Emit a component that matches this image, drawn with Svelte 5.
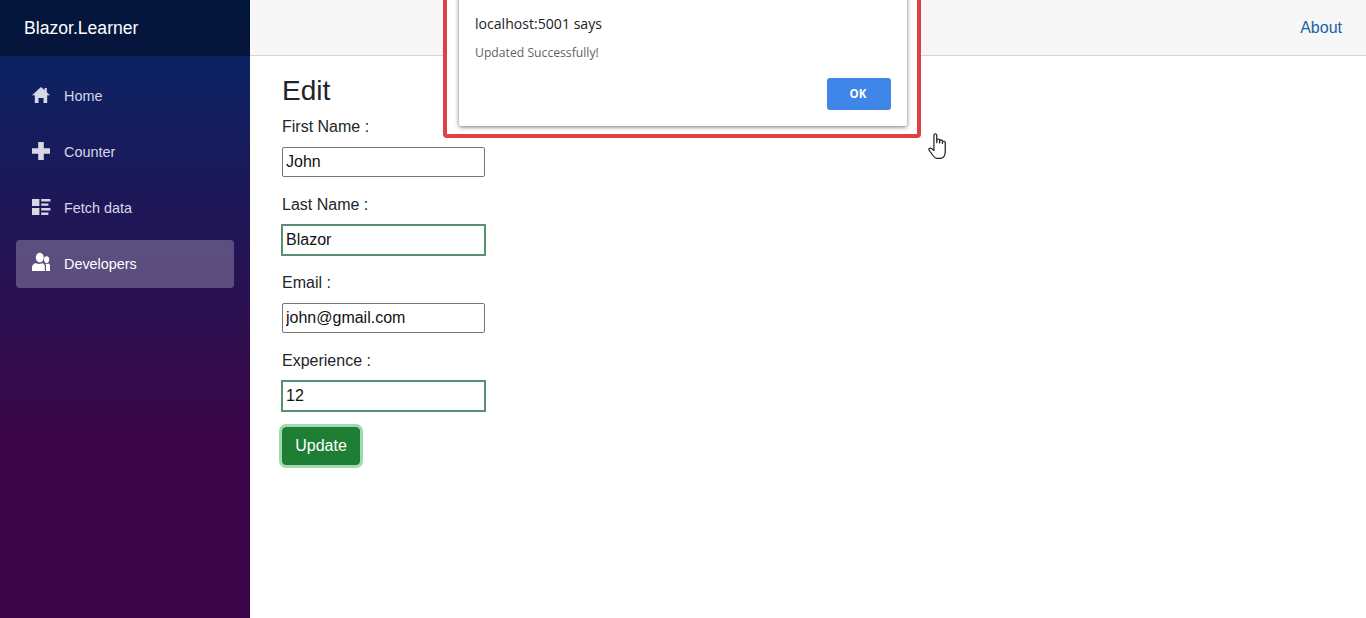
<script>
  const nav = [
    { label: 'Home', icon: 'home' },
    { label: 'Counter', icon: 'plus' },
    { label: 'Fetch data', icon: 'list' },
    { label: 'Developers', icon: 'people', active: true }
  ];
  const fields = [
    { label: 'First Name :', value: 'John', modified: false },
    { label: 'Last Name :', value: 'Blazor', modified: true },
    { label: 'Email :', value: 'john@gmail.com', modified: false },
    { label: 'Experience :', value: '12', modified: true }
  ];
</script>

<div class="page">
  <aside class="sidebar">
    <div class="brand">Blazor.Learner</div>
    <nav class="nav">
      {#each nav as item}
        <div class="item">
          <div class="link" class:active={item.active}>
            <svg class="icon" viewBox="0 0 18 18" aria-hidden="true">
              {#if item.icon === 'home'}
                <path d="M9 1 0 9.2H2.8V17H6.5V12H11.5V17H15.2V9.2H18L14.8 6.3V2H12.6V4.3Z" />
              {:else if item.icon === 'plus'}
                <path d="M6.2 0H11.8V6.2H18V11.8H11.8V18H6.2V11.8H0V6.2H6.2Z" />
              {:else if item.icon === 'list'}
                <path d="M0 1H7.4V8H0ZM0 10H7.4V17H0ZM9.2 1H18.4V3.4H9.2ZM9.2 5.4H16.4V7.8H9.2ZM9.2 10H18.4V12.4H9.2ZM9.2 14.6H16.4V17H9.2Z" />
              {:else}
                <ellipse cx="7.8" cy="3.6" rx="4" ry="4.8" />
                <ellipse cx="14.6" cy="5.6" rx="2.6" ry="3.4" />
                <path d="M0 17V13.4C0 11.4 1.4 10 3.8 9 5.4 10.2 9 10.2 10.6 9 11.8 9.8 12.6 10.8 12.8 12V17ZM14 17V11.4C13.8 10.8 13.6 10.2 13.2 9.6 14.4 10 15.6 10 16.6 9.4 17.6 10 18 10.8 18 11.8V17Z" />
              {/if}
            </svg>
            <span>{item.label}</span>
          </div>
        </div>
      {/each}
    </nav>
  </aside>

  <main class="main">
    <header class="topbar"><span class="about">About</span></header>
    <section class="content">
      <h3>Edit</h3>
      {#each fields as f}
        <div class="field">
          <label for={f.label}>{f.label}</label>
          <input id={f.label} class:modified={f.modified} value={f.value} />
        </div>
      {/each}
      <button class="update" type="button">Update</button>
    </section>
  </main>

  <div class="highlight"></div>
  <div class="dialog">
    <div class="origin">localhost:5001 says</div>
    <div class="message">Updated Successfully!</div>
    <div class="actions"><button class="ok" type="button">OK</button></div>
  </div>

  <svg class="cursor" viewBox="0 0 14.6 24.6" preserveAspectRatio="none" aria-hidden="true">
    <path d="M5 1.2C5.9.4 7 .8 7.1 2V9.2L7.3 6.2C8 5.4 9.2 5.6 9.4 6.6V9.4L9.6 6.9C10.3 6.2 11.4 6.4 11.7 7.4V10L11.9 8.1C12.6 7.5 13.7 7.7 14 8.7V17.5C14 20.6 12.6 23.4 10.8 24H6.8C5.6 23.5 4.8 22.4 3.9 21.1L.9 16.3C.3 15 1.5 13.8 2.8 14.6L4.8 16.6V2Z" fill="#fff" stroke="#222" stroke-width="1" stroke-linejoin="round" />
  </svg>
</div>

<style>
  :global(body) {
    margin: 0;
    background: #fff;
  }
  .page {
    position: relative;
    display: flex;
    height: 618px;
    overflow: hidden;
    font-family: "Liberation Sans", Arial, sans-serif;
    color: #212529;
  }
  .sidebar {
    width: 250px;
    flex: none;
    background-image: linear-gradient(180deg, #052767 0%, #3a0647 70%);
  }
  .brand {
    height: 56px;
    box-sizing: border-box;
    padding-left: 24px;
    line-height: 56px;
    font-size: 17.6px;
    color: #fff;
    background: rgba(0, 0, 0, 0.4);
  }
  .nav {
    padding-top: 16px;
  }
  .item {
    padding: 0 16px 8px;
    font-size: 14.4px;
  }
  .link {
    display: flex;
    align-items: center;
    height: 48px;
    border-radius: 4px;
    color: #d7d7e6;
  }
  .link.active {
    background: rgba(255, 255, 255, 0.25);
    color: #fff;
  }
  .icon {
    width: 18px;
    height: 18px;
    margin: -2px 14px 0 16px;
    fill: currentColor;
    flex: none;
    overflow: visible;
  }
  .main {
    flex: 1;
    min-width: 0;
  }
  .topbar {
    height: 56px;
    box-sizing: border-box;
    display: flex;
    align-items: center;
    justify-content: flex-end;
    padding-right: 24px;
    background: #f7f7f7;
    border-bottom: 1px solid #d6d5d5;
  }
  .about {
    color: #1861ac;
    font-size: 16px;
  }
  .content {
    padding: 17.6px 32px 0;
  }
  h3 {
    margin: 0 0 8px;
    font-size: 28px;
    font-weight: 500;
    line-height: 1.2;
  }
  .field {
    margin-bottom: 16px;
  }
  label {
    display: block;
    margin-bottom: 8px;
    font-size: 16px;
    line-height: 24px;
  }
  input {
    display: block;
    box-sizing: border-box;
    width: 203px;
    height: 30px;
    padding: 1px 3px;
    border: 1px solid #767676;
    border-radius: 2px;
    font: 16px "Liberation Sans", Arial, sans-serif;
    color: #111;
    background: #fff;
  }
  input.modified {
    border-radius: 0;
    border-color: #5a9070;
    outline: 1px solid #5a9070;
  }
  .update {
    display: block;
    width: 78px;
    height: 38px;
    padding: 0;
    border: 1px solid #1e7e34;
    border-radius: 4px;
    background: #1e7e34;
    color: #fff;
    font: 16px "Liberation Sans", Arial, sans-serif;
    box-shadow: 0 0 0 3px rgba(72, 180, 97, 0.5);
  }
  .highlight {
    position: absolute;
    left: 443px;
    top: -8px;
    width: 478px;
    height: 146px;
    box-sizing: border-box;
    border: 4.5px solid #dc4245;
    border-radius: 4px;
    background: #fff;
  }
  .dialog {
    position: absolute;
    left: 459px;
    top: -8px;
    width: 448px;
    height: 134px;
    box-sizing: border-box;
    padding: 22px 16px 0;
    background: #fff;
    border-radius: 0 0 2px 2px;
    box-shadow: 0 1px 4px rgba(0, 0, 0, 0.55);
    font-family: "Open Sans", "Noto Sans", sans-serif;
  }
  .origin {
    font-size: 14.1px;
    line-height: 19px;
    color: #202124;
  }
  .message {
    margin-top: 12px;
    font-size: 12.2px;
    line-height: 16px;
    color: #5f6368;
  }
  .actions {
    display: flex;
    justify-content: flex-end;
    margin-top: 17px;
  }
  .ok {
    width: 64px;
    height: 32px;
    padding: 0 2px 2px 0;
    border: 0;
    border-radius: 3px;
    background: #3f86e8;
    color: #fff;
    font: 700 11.5px "Open Sans", "Noto Sans", sans-serif;
  }
  .cursor {
    position: absolute;
    left: 928px;
    top: 133px;
    width: 18px;
    height: 26px;
  }
</style>
